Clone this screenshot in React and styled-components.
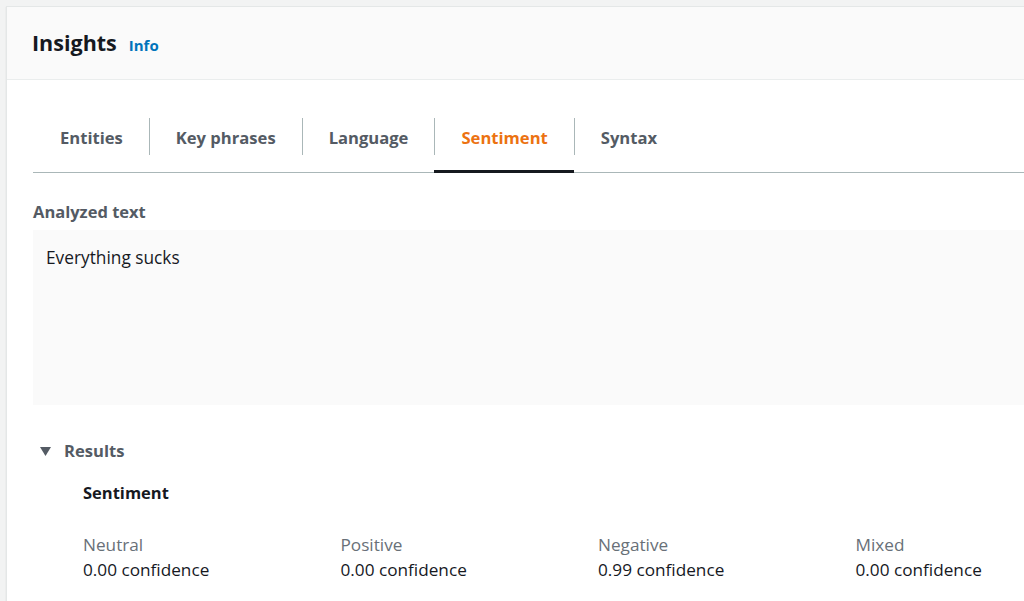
import React from 'react';
import styled, { createGlobalStyle } from 'styled-components';

const GlobalStyle = createGlobalStyle`
  html, body {
    margin: 0;
    background: #f2f3f3;
    overflow: hidden;
  }
  body {
    font-family: "Open Sans", Roboto, "Liberation Sans", Arial, sans-serif;
    color: #16191f;
  }
`;

const tabs = ['Entities', 'Key phrases', 'Language', 'Sentiment', 'Syntax'];

const scores = [
  { label: 'Neutral', value: '0.00' },
  { label: 'Positive', value: '0.00' },
  { label: 'Negative', value: '0.99' },
  { label: 'Mixed', value: '0.00' },
];

const App = () => {
  return (
    <Page>
      <GlobalStyle />
      <Card>
        <CardHeader>
          <Title>Insights</Title>
          <InfoLink href="#">Info</InfoLink>
        </CardHeader>
        <CardBody>
          <TabList>
            {tabs.map((tab, i) => (
              <Tab key={tab} active={tab === 'Sentiment'}>
                <TabLabel first={i === 0} active={tab === 'Sentiment'}>
                  {tab}
                </TabLabel>
              </Tab>
            ))}
          </TabList>

          <FieldLabel>Analyzed text</FieldLabel>
          <TextBox>Everything sucks</TextBox>

          <ResultsToggle>
            <svg width="11" height="9" viewBox="0 0 11 9">
              <path d="M0 0 H11 L5.5 9 Z" fill="#545b64" />
            </svg>
            Results
          </ResultsToggle>

          <Results>
            <ResultsTitle>Sentiment</ResultsTitle>
            <ScoreGrid>
              {scores.map(s => (
                <Score key={s.label}>
                  <ScoreLabel>{s.label}</ScoreLabel>
                  <ScoreValue>{s.value} confidence</ScoreValue>
                </Score>
              ))}
            </ScoreGrid>
          </Results>
        </CardBody>
      </Card>
    </Page>
  );
};

export default App;

const Page = styled.div`
  padding: 6px 0 0 6px;
  height: 601px;
  box-sizing: border-box;
`;

const Card = styled.div`
  width: 1200px;
  min-height: 620px;
  background: #ffffff;
  border: 1px solid #e4e7e7;
  box-shadow: 0 1px 1px 0 rgba(0, 28, 36, 0.15);
`;

const CardHeader = styled.div`
  display: flex;
  align-items: center;
  gap: 12px;
  height: 72px;
  padding-left: 25px;
  background: #fafafa;
  border-bottom: 1px solid #eaeded;
`;

const Title = styled.h2`
  margin: 0;
  font-size: 21.5px;
  font-weight: 700;
  color: #16191f;
  line-height: 30px;
`;

const InfoLink = styled.a`
  font-size: 15px;
  font-weight: 700;
  color: #0073bb;
  text-decoration: none;
  margin-top: 4px;
`;

const CardBody = styled.div`
  padding-left: 26px;
`;

const TabList = styled.div`
  display: flex;
  margin-top: 20px;
  border-bottom: 1px solid #aab7b8;
`;

const Tab = styled.div`
  padding: 18px 0 15px;
  border-bottom: 3px solid ${({ active }) => (active ? '#16191f' : 'transparent')};
  margin-bottom: -1px;
`;

const TabLabel = styled.div`
  display: flex;
  align-items: center;
  height: 37px;
  padding: 1px 26px 0;
  box-sizing: border-box;
  border-left: 1px solid ${({ first }) => (first ? 'transparent' : '#aab7b8')};
  font-size: 16.6px;
  font-weight: 700;
  color: ${({ active }) => (active ? '#ec7211' : '#545b64')};
`;

const FieldLabel = styled.div`
  margin-top: 29px;
  font-size: 16.5px;
  line-height: 20px;
  font-weight: 700;
  color: #545b64;
`;

const TextBox = styled.div`
  margin-top: 8px;
  height: 175px;
  box-sizing: border-box;
  padding: 18px 13px 16px;
  background: #fafafa;
  font-size: 17.3px;
  line-height: 20px;
  color: #16191f;
`;

const ResultsToggle = styled.div`
  display: flex;
  align-items: center;
  gap: 13px;
  margin-top: 36px;
  padding-left: 7px;
  font-size: 16.6px;
  line-height: 20px;
  font-weight: 700;
  color: #545b64;
`;

const Results = styled.div`
  padding-left: 50px;
`;

const ResultsTitle = styled.div`
  margin-top: 22px;
  font-size: 16.5px;
  line-height: 20px;
  font-weight: 700;
  color: #16191f;
`;

const ScoreGrid = styled.div`
  display: grid;
  grid-template-columns: repeat(4, 257.5px);
  margin-top: 29px;
`;

const Score = styled.div`
  display: flex;
  flex-direction: column;
`;

const ScoreLabel = styled.div`
  font-size: 17.2px;
  line-height: 25px;
  color: #687078;
`;

const ScoreValue = styled.div`
  font-size: 17.2px;
  line-height: 25px;
  color: #16191f;
`;
